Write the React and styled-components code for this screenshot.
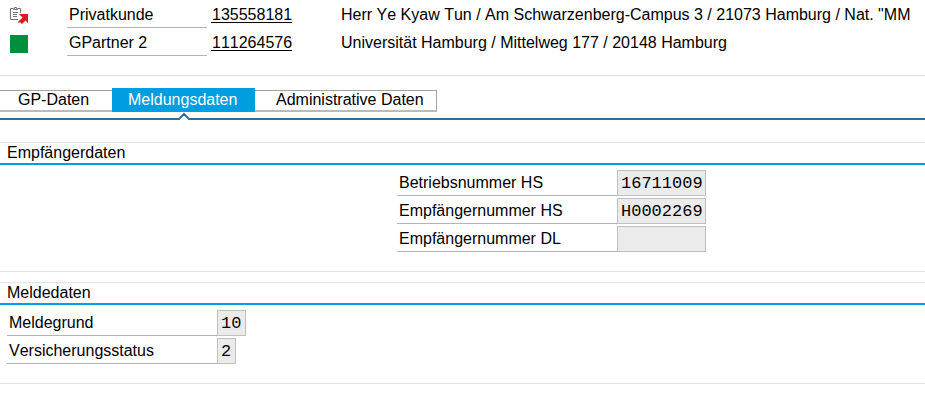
// src/App.jsx

import React, { useState } from "react";
import styled, { createGlobalStyle } from "styled-components";

const GlobalStyle = createGlobalStyle`
  * {
    box-sizing: border-box;
  }
  body {
    margin: 0;
    background-color: #ffffff;
    color: #000000;
    font-family: "Liberation Sans", Arial, sans-serif;
    font-size: 16px;
    font-kerning: none;
    line-height: 20px;
  }
`;

const Page = styled.main`
  width: 100%;
  overflow: hidden;
`;

const PartnerList = styled.header`
  padding-bottom: 19px;
  border-bottom: 1px solid #e3e3e3;
`;

const PartnerRow = styled.div`
  display: grid;
  grid-template-columns: 57px 140px 130px 1fr;
  height: 28px;
  padding-left: 10px;
`;

const PartnerIcon = styled.div`
  padding-top: 7px;

  svg {
    display: block;
  }
`;

const PartnerRole = styled.div`
  height: 28px;
  padding: 5px 2px 0;
  border-bottom: 1px solid #b4b4b4;
`;

const PartnerNumber = styled.a`
  justify-self: start;
  height: 23px;
  margin-left: 4px;
  padding: 5px 0 0 1px;
  border-bottom: 1px solid #000000;
  color: #000000;
  line-height: 19px;
  text-decoration: none;
`;

const PartnerAddress = styled.div`
  padding: 5px 0 0 4px;
  white-space: nowrap;
`;

const TabBar = styled.div`
  display: flex;
  align-items: flex-end;
  padding: 12px 0 6px;
  border-bottom: 2px solid #2e6c99;
`;

const Tab = styled.button`
  position: relative;
  width: ${(props) => props.$width}px;
  height: ${(props) => (props.$active ? 24 : 22)}px;
  padding: 0;
  padding-bottom: ${(props) => (props.$active ? 0 : 2)}px;
  padding-left: ${(props) => props.$indent}px;
  border: 0;
  border-top: 1px solid ${(props) => (props.$active ? "#009de0" : "#a3a3a3")};
  border-bottom: 2px solid ${(props) => (props.$active ? "#009de0" : "#bababa")};
  background-color: ${(props) => (props.$active ? "#009de0" : "#ffffff")};
  color: ${(props) => (props.$active ? "#ffffff" : "#000000")};
  font: inherit;
  font-kerning: none;
  line-height: 18px;
  text-align: left;
  white-space: nowrap;
  cursor: pointer;

  &:last-child {
    border-right: 1px solid #a3a3a3;
  }
`;

/* sits over the line below the tabs */
const Notch = styled.svg`
  position: absolute;
  top: 23px;
  right: 0;
  left: 0;
  margin: 0 auto;
`;

const Section = styled.section`
  margin-top: ${(props) => props.$gap}px;
  padding-bottom: 19px;
  border-top: 1px solid #e3e3e3;
  border-bottom: 1px solid #e3e3e3;
`;

const SectionTitle = styled.h2`
  margin: 0 0 5px;
  padding: 0 7px;
  border-bottom: 2px solid #009de0;
  font-size: 16px;
  font-weight: normal;
`;

const FieldList = styled.div`
  display: flex;
  flex-direction: column;
  gap: 2px;
  padding-left: ${(props) => props.$indent}px;
`;

const Field = styled.div`
  display: flex;
  height: 26px;
`;

const FieldLabel = styled.label`
  width: ${(props) => props.$width}px;
  padding: 3px 2px;
  border-bottom: 1px solid #b4b4b4;
`;

const FieldInput = styled.input`
  width: ${(props) => props.$chars * 10 + 9}px;
  padding: 0 0 0 3px;
  border: 1px solid #bfbfbf;
  border-radius: 0;
  outline: 0;
  background-color: #ebebeb;
  color: #000000;
  font-family: "Liberation Mono", "Courier New", monospace;
  font-size: 17px;
`;

const partners = [
  {
    icon: "clipboard",
    role: "Privatkunde",
    number: "135558181",
    address:
      'Herr Ye Kyaw Tun / Am Schwarzenberg-Campus 3 / 21073 Hamburg / Nat. "MM',
  },
  {
    icon: "square",
    role: "GPartner 2",
    number: "111264576",
    address: "Universität Hamburg / Mittelweg 177 / 20148 Hamburg",
  },
];

const tabs = [
  { id: "gp", title: "GP-Daten", width: 112, indent: 18 },
  { id: "meldung", title: "Meldungsdaten", width: 143, indent: 16 },
  { id: "admin", title: "Administrative Daten", width: 182, indent: 21 },
];

const empfaenger = [
  { id: "betriebsnummer", label: "Betriebsnummer HS", value: "16711009", chars: 8 },
  { id: "empfaenger-hs", label: "Empfängernummer HS", value: "H0002269", chars: 8 },
  { id: "empfaenger-dl", label: "Empfängernummer DL", value: "", chars: 8 },
];

const meldung = [
  { id: "meldegrund", label: "Meldegrund", value: "10", chars: 2 },
  { id: "status", label: "Versicherungsstatus", value: "2", chars: 1 },
];

function ClipboardIcon() {
  return (
    <svg width="18" height="17" viewBox="0 0 18 17" fill="none">
      <path d="M3 1.5H.5v11H8M8 1.5h2.5V6" stroke="#77737c" />
      <path d="M3.5 2.5v-1h1v-1h2v1h1v1z" stroke="#77737c" />
      <path d="M3 5.5h5M3 7.5h4M3 9.5h4" stroke="#77737c" />
      <path d="M9 7h9v9l-2.500-2.500L12 17l-1.500-1.500H8V15l4.500-4.500z" fill="#d91a1a" />
    </svg>
  );
}

function SquareIcon() {
  return (
    <svg width="18" height="18">
      <rect width="18" height="18" fill="#008f3c" />
    </svg>
  );
}

function Fields({ fields, indent, labelWidth }) {
  return (
    <FieldList $indent={indent}>
      {fields.map((field) => (
        <Field key={field.id}>
          <FieldLabel htmlFor={field.id} $width={labelWidth}>
            {field.label}
          </FieldLabel>
          <FieldInput
            id={field.id}
            type="text"
            readOnly
            value={field.value}
            $chars={field.chars}
          />
        </Field>
      ))}
    </FieldList>
  );
}

function App() {
  const [activeTab, setActiveTab] = useState("meldung");

  return (
    <Page>
      <GlobalStyle />
      <PartnerList>
        {partners.map((partner) => (
          <PartnerRow key={partner.number}>
            <PartnerIcon>
              {partner.icon === "clipboard" ? <ClipboardIcon /> : <SquareIcon />}
            </PartnerIcon>
            <PartnerRole>{partner.role}</PartnerRole>
            <PartnerNumber href={`#${partner.number}`}>
              {partner.number}
            </PartnerNumber>
            <PartnerAddress>{partner.address}</PartnerAddress>
          </PartnerRow>
        ))}
      </PartnerList>
      <TabBar role="tablist">
        {tabs.map((tab) => (
          <Tab
            key={tab.id}
            type="button"
            role="tab"
            aria-selected={tab.id === activeTab}
            $active={tab.id === activeTab}
            $width={tab.width}
            $indent={tab.indent}
            onClick={() => {
              setActiveTab(tab.id);
            }}
          >
            {tab.title}
            {tab.id === activeTab && (
              <Notch width="15" height="8" viewBox="0 0 15 8">
                <path d="M3 8V7l5-5 5 5v1z" fill="#ffffff" />
                <path
                  d="M0 7h3l5-5 5 5h2"
                  fill="none"
                  stroke="#2e6c99"
                  strokeWidth="2"
                />
              </Notch>
            )}
          </Tab>
        ))}
      </TabBar>
      <Section $gap={22}>
        <SectionTitle>Empfängerdaten</SectionTitle>
        <Fields fields={empfaenger} indent={397} labelWidth={220} />
      </Section>
      <Section $gap={10}>
        <SectionTitle>Meldedaten</SectionTitle>
        <Fields fields={meldung} indent={7} labelWidth={210} />
      </Section>
    </Page>
  );
}

export default App;
